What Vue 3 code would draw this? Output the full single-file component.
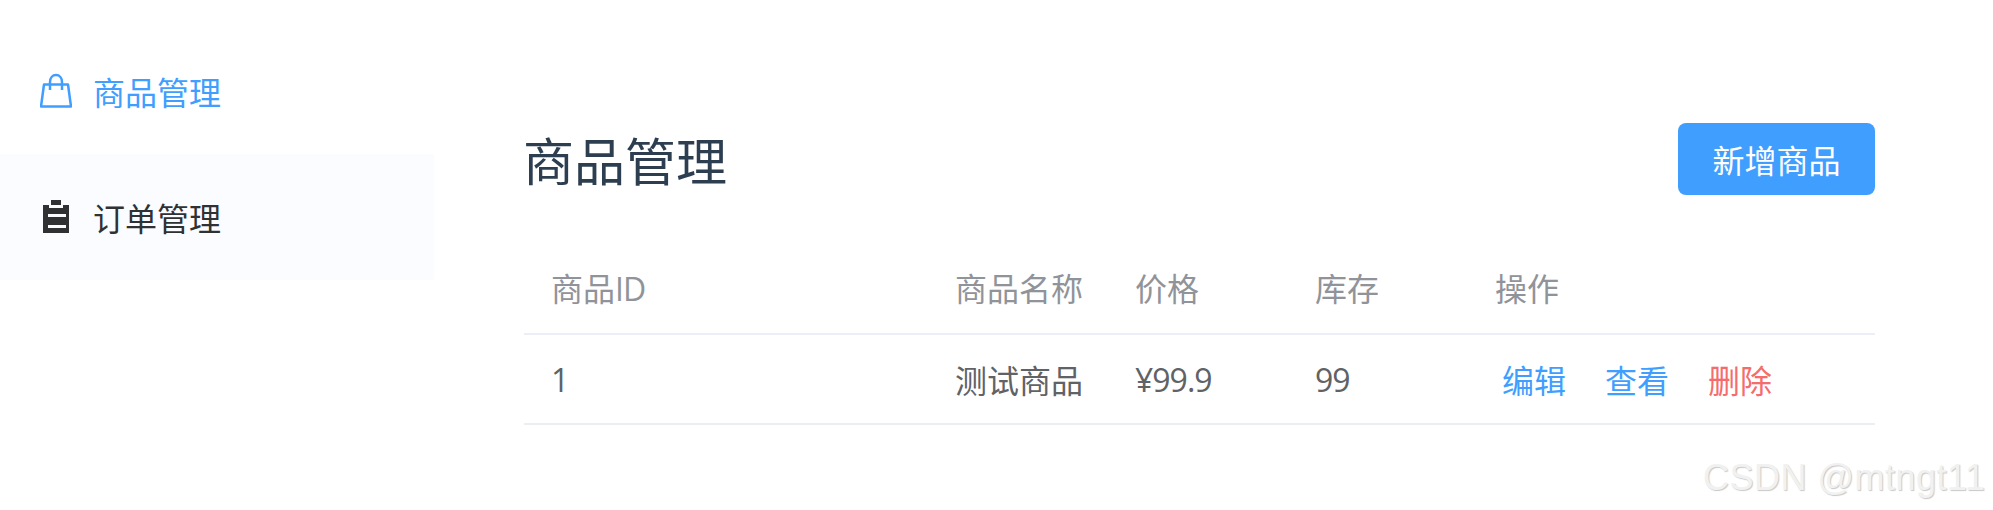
<template>
  <div class="layout">
    <aside class="sidebar">
      <div
        v-for="item in menu"
        :key="item.name"
        class="menu-item"
        :class="{ active: item.active }"
      >
        <svg v-if="item.icon === 'goods'" class="menu-icon" viewBox="0 0 32 36">
          <path
            d="M4 11.500H28L31 33.500H1L4 11.500Z"
            fill="none"
            stroke="currentColor"
            stroke-width="2.500"
            stroke-linejoin="round"
          />
          <path
            d="M10 17V9C10 5 12.500 2 16 2S22 5 22 9V17"
            fill="none"
            stroke="currentColor"
            stroke-width="2.500"
          />
        </svg>
        <svg v-else class="menu-icon" viewBox="0 0 32 36">
          <path
            fill="currentColor"
            fill-rule="evenodd"
            d="M3 6H9V9H23V6H29V34H3V6ZM8 15V18H26V15H8ZM8 26V29H26V26H8Z"
          />
          <rect x="11" y="1" width="10" height="5" fill="currentColor" />
        </svg>
        <span>{{ item.name }}</span>
      </div>
    </aside>

    <main class="content">
      <div class="toolbar">
        <h1>商品管理</h1>
        <button class="add-btn">新增商品</button>
      </div>

      <table class="goods-table">
        <colgroup>
          <col class="col-id" />
          <col class="col-sm" />
          <col class="col-sm" />
          <col class="col-sm" />
          <col />
        </colgroup>
        <thead>
          <tr>
            <th>商品<span class="tight">ID</span></th>
            <th>商品名称</th>
            <th>价格</th>
            <th>库存</th>
            <th>操作</th>
          </tr>
        </thead>
        <tbody>
          <tr v-for="row in goods" :key="row.id">
            <td class="tight">{{ row.id }}</td>
            <td>{{ row.name }}</td>
            <td class="tight">¥{{ row.price }}</td>
            <td class="tight">{{ row.stock }}</td>
            <td>
              <div class="actions">
                <a class="link">编辑</a>
                <a class="link">查看</a>
                <a class="link danger">删除</a>
              </div>
            </td>
          </tr>
        </tbody>
      </table>
    </main>

    <div class="watermark">CSDN @mtngt11</div>
  </div>
</template>

<script setup>
const menu = [
  { name: "商品管理", icon: "goods", active: true },
  { name: "订单管理", icon: "order", active: false },
];

const goods = [{ id: 1, name: "测试商品", price: 99.9, stock: 99 }];
</script>

<style>
html,
body {
  background: #fff;
}
</style>

<style scoped>
.layout {
  position: relative;
  display: flex;
  width: 1993px;
  height: 510px;
  overflow: hidden;
  font-family: "Open Sans", "Noto Sans CJK SC", sans-serif;
}

.sidebar {
  width: 434px;
  padding-top: 28px;
  flex-shrink: 0;
  box-sizing: border-box;
}

.menu-item {
  display: flex;
  align-items: center;
  height: 126px;
  padding-left: 40px;
  font-size: 32px;
  color: #303133;
  background: #fafcff;
}

.menu-item.active {
  color: #409eff;
  background: #fff;
}

.menu-icon {
  width: 32px;
  height: 36px;
  margin-right: 21px;
}

.content {
  width: 1351px;
  margin-left: 90px;
  padding-top: 122px;
}

.toolbar {
  display: flex;
  align-items: center;
  justify-content: space-between;
  margin-bottom: 49px;
}

h1 {
  margin: 0 0 0 -1px;
  font-size: 51px;
  font-weight: 400;
  color: #2c3e50;
}

.add-btn {
  width: 197px;
  height: 72px;
  padding: 0;
  border: none;
  border-radius: 8px;
  font-family: inherit;
  font-size: 32px;
  color: #fff;
  background: #409eff;
}

.goods-table {
  width: 100%;
  border-collapse: collapse;
  table-layout: fixed;
  font-size: 32px;
}

.col-id {
  width: 404px;
}

.col-sm {
  width: 180px;
}

th,
td {
  padding: 0 27px;
  text-align: left;
  border-bottom: 2px solid #ebeef5;
  white-space: nowrap;
}

th {
  height: 83px;
  padding-bottom: 5px;
  font-weight: 400;
  color: #909399;
}

td {
  height: 88px;
  color: #606266;
}

.tight {
  letter-spacing: -1px;
}

.actions {
  display: flex;
  gap: 39px;
  padding-left: 7px;
}

.link {
  color: #409eff;
}

.link.danger {
  color: #f56c6c;
}

.watermark {
  position: absolute;
  left: 1703px;
  top: 456px;
  font-family: "Liberation Sans", sans-serif;
  font-size: 36px;
  line-height: 44px;
  letter-spacing: 0.5px;
  color: #f1f1f1;
  white-space: nowrap;
  text-shadow: 1px 1px 1px #c8c8c8;
}
</style>
